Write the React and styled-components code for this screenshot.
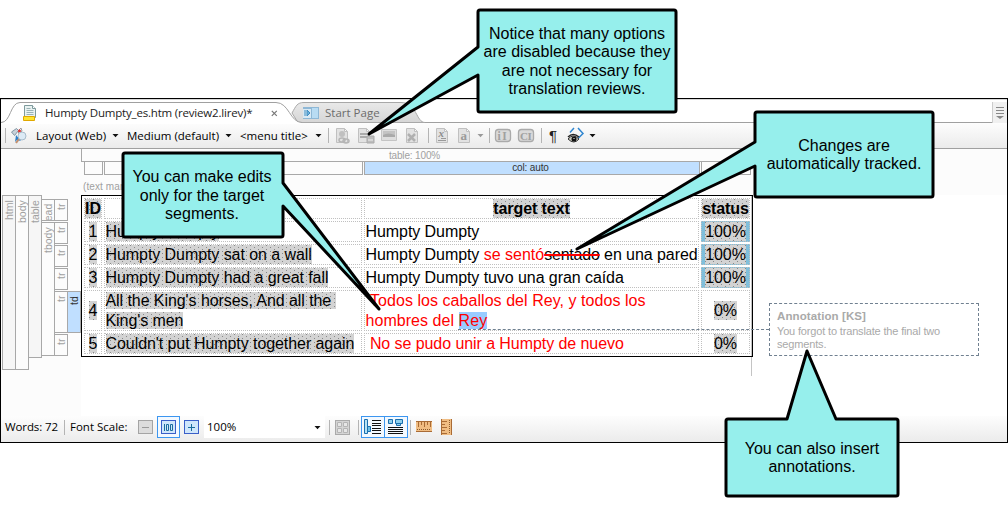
import React from "react";
import styled, { createGlobalStyle } from "styled-components";

const Global = createGlobalStyle`
  *{box-sizing:border-box}
  body{margin:0;background:#fff;overflow:hidden}
`;
const UI = '"Open Sans","Noto Sans",sans-serif';
const ARIAL = '"Liberation Sans",Arial,sans-serif';

const Page = styled.div`position:relative;width:1008px;height:506px;padding-top:98px;font-family:${UI};color:#000;`;
const Window = styled.div`width:1008px;height:345px;border:1px solid #000;display:flex;flex-direction:column;background:#fff;`;

const TabBar = styled.div`height:24px;flex:none;display:flex;padding-top:2px;border-bottom:1px solid #a0a0a0;border-top:1px solid #d8d8d8;background:#fff;`;
const Tab = styled.div`
  position:relative;flex:none;width:${p => p.$w}px;height:22px;margin-left:${p => p.$ml || 0}px;padding-left:${p => p.$pl}px;
  display:flex;align-items:center;color:${p => p.$color || "#222"};z-index:${p => p.$z || 0};
`;
const TabShape = styled.svg`position:absolute;left:0;top:0;`;
const TabContent = styled.div`position:relative;display:flex;align-items:center;height:22px;`;
const Label = styled.span`
  display:block;flex:none;width:${p => p.$w}px;margin-left:${p => p.$ml || 0}px;white-space:nowrap;
  font-size:${p => p.$size || 11.5}px;letter-spacing:${p => p.$ls || 0}px;line-height:18px;
`;
const Grow = styled.div`flex:1;`;
const TabMenu = styled.div`width:15px;height:21px;background:#f0f0f0;border-left:1px solid #ccc;`;

const Bar = styled.div`
  height:${p => p.$h}px;flex:none;display:flex;align-items:center;background:linear-gradient(#fdfdfd,#ebebeb);
  border-bottom:${p => (p.$line ? "1px solid #a0a0a0" : "0")};padding-bottom:${p => p.$pb || 0}px;
`;
const Sep = styled.div`width:1px;height:15px;flex:none;background:#b4b4b4;margin-left:${p => p.$ml || 0}px;`;
const Icon = styled.svg`display:block;flex:none;margin-left:${p => p.$ml || 0}px;overflow:visible;`;
const Pilcrow = styled.span`width:10px;margin-left:7px;flex:none;font:15px/18px ${ARIAL};color:#222;`;

const Workspace = styled.div`height:267px;flex:none;display:flex;flex-direction:column;background:#fff;`;
const ColumnHeader = styled.div`height:46px;flex:none;background:#fcfcfc;padding-left:80px;font:10px/12px ${ARIAL};letter-spacing:-.15px;color:#a0a0a0;`;
const TableSpan = styled.div`width:671px;height:13px;border:1px solid #a8a8a8;border-top:0;text-align:center;line-height:14px;padding-right:4px;`;
const ColumnRow = styled.div`display:flex;gap:1px;padding-left:3px;`;
const Column = styled.div`
  width:${p => p.$w}px;height:13px;border:1px solid #a8a8a8;border-top:0;text-align:center;line-height:12px;padding-right:3px;
  background:${p => (p.$on ? "#c0dfff" : "transparent")};color:${p => (p.$on ? "#333" : "#a0a0a0")};
`;
const MarkerNote = styled.div`height:18px;padding:6px 0 0 2px;line-height:12px;letter-spacing:.1px;`;
const Lower = styled.div`display:flex;flex:1;`;
const Gutter = styled.div`width:80px;flex:none;display:flex;background:#fcfcfc;padding-left:1px;`;
const Stack = styled.div`width:13px;flex:none;display:flex;flex-direction:column;gap:1px;padding-top:${p => p.$pt || 0}px;`;
const Tag = styled.div`
  width:14px;height:${p => p.$h}px;flex:none;border:1px solid #a8a8a8;overflow:hidden;
  background:${p => (p.$on ? "#c0dfff" : p.$shade ? "#f6f6f6" : "#fcfcfc")};
  color:${p => (p.$on ? "#333" : "#a0a0a0")};display:flex;justify-content:flex-end;
  writing-mode:vertical-rl;transform:rotate(180deg);font:10.5px/12px ${ARIAL};padding-bottom:4px;
`;
const Doc = styled.div`width:672px;height:162px;border:1px solid #000;padding:2px;
  display:grid;grid-template-columns:18px 258px 335px 49px;grid-template-rows:repeat(4,21px) 41px 21px;gap:2px;
  font:16px/20px ${ARIAL};letter-spacing:-.07px;box-shadow:inset -1px 0 0 #c4c4c4;`;
const Cell = styled.div`
  border:1px dotted #c0c0c0;display:flex;align-items:center;justify-content:${p => (p.$center ? "center" : "flex-start")};
  white-space:nowrap;font-weight:${p => (p.$bold ? 700 : 400)};background:${p => (p.$blue ? "#80bfdb" : "transparent")};
  padding-left:${p => (p.$center ? 0 : 0.5)}px;
`;
const Locked = styled.span`
  line-height:19px;background-color:#d3d3d3;
  background-image:url("data:image/svg+xml,%3Csvg xmlns='http://www.w3.org/2000/svg' width='8' height='4'%3E%3Cpath d='M0 0h1v1h-1zM4 2h1v1h-1z' fill='%23888'/%3E%3C/svg%3E");
`;
const Inserted = styled.span`color:#f00;letter-spacing:${p => p.$ls || 0}px;`;
const Deleted = styled.span`text-decoration:line-through #f00 2px;letter-spacing:-.2px;`;
const Selected = styled.span`color:#f00;background:#99ccff;`;
const MarginLine = styled.div`position:absolute;left:751px;top:357px;width:1px;height:19px;background:#c4c4c4;`;

const Toggle = styled.div`width:${p => p.$w || 24}px;height:22px;flex:none;border:1px solid #3c96f0;background:#f3f9ff;display:flex;align-items:center;justify-content:center;margin-left:${p => p.$ml || 0}px;`;
const Combo = styled.div`width:121px;height:22px;flex:none;margin-left:5px;background:#fff;display:flex;align-items:center;padding-left:3px;`;

const Connector = styled.div`position:absolute;left:458px;top:329px;width:311px;border-top:1px dashed #708090;`;
const Annotation = styled.div`
  position:absolute;left:769px;top:303px;width:210px;height:53px;border:1px dashed #708090;padding:5px 7px;
  font:11px/13px ${ARIAL};color:#a9a9a9;letter-spacing:-.16px;
`;
const AnnotationTitle = styled.div`font-weight:700;font-size:11.5px;line-height:14px;margin-bottom:2px;letter-spacing:.1px;`;
const Overlay = styled.svg`position:absolute;left:0;top:0;pointer-events:none;`;
const CalloutText = styled.div`
  position:absolute;left:${p => p.$x}px;top:${p => p.$y}px;width:${p => p.$w}px;text-align:center;white-space:nowrap;
  font:16px/${p => p.$lh || 18}px ${ARIAL};
`;

const Caret = ({ ml, color = "#111" }) => (
  <Icon $ml={ml} width="7" height="5" viewBox="0 0 7 5"><path d="M0.5 1h6L3.5 4.2z" fill={color} /></Icon>
);
const Sheet = () => <path d="M.5 .5h8l3 3v11h-11z M8.5 .5v3h3" fill="#e2e2e2" stroke="#c0c0c0" />;
const Badge = ({ children, ml }) => (
  <Icon $ml={ml} width="16" height="14">
    <rect x=".5" y=".5" width="15" height="12" rx="3" fill="#dadada" stroke="#aaa" strokeWidth="1.3" />
    {children}
  </Icon>
);

const calloutShapes = [
  "M480 10H674Q676 10 676 12V110Q676 112 674 112H480Q478 112 478 110V75L369 134L478 47V12Q478 10 480 10Z",
  "M125 153H281Q283 153 283 155V183L379 309L283 206V235Q283 237 281 237H125Q123 237 123 235V155Q123 153 125 153Z",
  "M757 112H931Q933 112 933 114V195Q933 197 931 197H757Q755 197 755 195V166L577 249L755 142V114Q755 112 757 112Z",
  "M728 419H787L807 351L836 419H896Q898 419 898 421V494Q898 496 896 496H728Q726 496 726 494V421Q726 419 728 419Z",
];

export default function App() {
  return (
    <Page>
      <Global />
      <Window>
        <TabBar>
          <Tab $w={302} $pl={22} $z={1}>
            <TabShape width="302" height="22">
              <path d="M0 20.5C10 20.5 9 .5 19 .5H275C288 .5 289 20.5 301 20.5V22H0z" fill="#fff" />
              <path d="M0 20.5C10 20.5 9 .5 19 .5H275C288 .5 289 20.5 301 20.5" fill="none" stroke="#a0a0a0" />
            </TabShape>
            <TabContent>
              <Icon width="14" height="17" viewBox="0 0 14 17">
                <path d="M1.5 .5h8l3 3v9h-11z" fill="#e9f2f2" stroke="#7e9a9c" /><path d="M9.5 .5v3h3" fill="#fff" stroke="#7e9a9c" />
                <path d="M3.5 3.5h4M3.5 5.5h7M3.5 7.5h7M3.5 9.5h7" stroke="#9ab3b5" />
                <path d="M.5 11.5h11v4h-11z" fill="#ffe52e" stroke="#e0a800" />
              </Icon>
              <Label $ml={8} $w={222} $ls={-0.19}>Humpty Dumpty_es.htm (review2.lirev)*</Label>
              <Icon $ml={4} width="7" height="7" viewBox="0 0 7 7"><path d="M.8 .8l5 5M5.8 .8l-5 5" stroke="#777" strokeWidth="1.2" /></Icon>
            </TabContent>
          </Tab>
          <Tab $w={135} $ml={-13} $pl={13} $color="#6c6c6c">
            <TabShape width="135" height="22">
              <defs><linearGradient id="tab" x2="0" y2="1"><stop stopColor="#e9e9e9" /><stop offset="1" stopColor="#d6d6d6" /></linearGradient></defs>
              <path d="M2 11C6 4 7 .5 14 .5H111C127 .5 126 20.5 135 20.5H8z" fill="url(#tab)" stroke="#a8a8a8" />
            </TabShape>
            <TabContent>
              <Icon width="16" height="12" viewBox="0 0 16 12">
                <path d="M0 0h16v12H0z" fill="#8fb8d6" /><path d="M9 1h6v10H9z" fill="#b9dcf3" /><path d="M0 2h8v9H0z" fill="#d9e9f4" />
                <path d="M2 3v6M4 3l3 3-3 3z" stroke="#3f8ec2" fill="#6fb1dc" />
              </Icon>
              <Label $ml={6} $w={60}>Start Page</Label>
            </TabContent>
          </Tab>
          <Grow />
          <TabMenu>
            <svg width="14" height="20"><path d="M3 5.5h8M3 8.5h8M3 11.5h8" stroke="#888" /><path d="M3 14h8l-4 3z" fill="#888" /></svg>
          </TabMenu>
        </TabBar>
        <Bar $h={26} $line>
          <Sep $ml={4} />
          <Icon $ml={5} width="17" height="17" viewBox="0 0 17 17">
            <path d="M.5 5l5-3.5 2 2-4 5z" fill="#c8d2da" stroke="#8296a4" />
            <path d="M7 4l3-3 1 3-3 3z" fill="#fff" stroke="#999" /><path d="M7 4h3M8.5 2.5v3" stroke="#e03030" strokeWidth="1.5" />
            <path d="M5 8l5 6-4-1-2 2z" fill="#2d7fc8" />
            <circle cx="11" cy="9" r="4" fill="#dceaf5" stroke="#a8bccb" /><path d="M8 12l-3 4" stroke="#c09070" strokeWidth="2" />
          </Icon>
          <Label $ml={8} $w={73}>Layout (Web)</Label><Caret ml={3} />
          <Label $ml={8} $w={94}>Medium (default)</Label><Caret ml={4} />
          <Label $ml={8} $w={70}>&lt;menu title&gt;</Label><Caret ml={5} />
          <Sep $ml={6} />
          <Icon $ml={7} width="16" height="16"><Sheet /><circle cx="6" cy="6" r="3" fill="#c0c0c0" /><ellipse cx="6" cy="12" rx="3" ry="2" fill="none" stroke="#b5b5b5" strokeWidth="1.5" /><ellipse cx="10" cy="13" rx="3" ry="2" fill="none" stroke="#b5b5b5" strokeWidth="1.5" /></Icon>
          <Icon $ml={6} width="16" height="16"><Sheet /><path d="M2 6h7M2 9h7" stroke="#999" strokeWidth="1.5" /><path d="M9 8h7v7H9z" fill="#bdbdbd" stroke="#aaa" /><path d="M10 12h5" stroke="#eee" /></Icon>
          <Icon $ml={7} width="16" height="14"><path d="M.5 .5h15v11H.5z" fill="#dedede" stroke="#c4c4c4" /><path d="M2 2h12v6H2z" fill="#c4c4c4" /><path d="M2 6q5-3 12 0v2H2z" fill="#aaa" /></Icon>
          <Icon $ml={9} width="14" height="16"><Sheet /><path d="M2 6l7 7M9 6l-7 7" stroke="#b0b0b0" strokeWidth="2.5" /></Icon>
          <Sep $ml={8} />
          <Icon $ml={7} width="13" height="16"><Sheet /><text x="2.5" y="9" fontFamily="Liberation Serif,serif" fontStyle="italic" fontWeight="700" fontSize="11" fill="#8c8c8c">x</text><path d="M5 10.5h5M2 12.5h8" stroke="#999" /></Icon>
          <Icon $ml={9} width="13" height="16"><Sheet /><text x="2.5" y="12" fontFamily="Liberation Serif,serif" fontWeight="700" fontSize="13" fill="#999">a</text></Icon>
          <Caret ml={6} color="#999" />
          <Sep $ml={5} />
          <Badge ml={5}><text x="2.5" y="10.5" fontFamily="Liberation Serif,serif" fontWeight="700" fontSize="11.5" fill="#a0a0a0" letterSpacing="1.5">iI</text></Badge>
          <Badge ml={7}><text x="2" y="10.5" fontFamily="Liberation Serif,serif" fontWeight="700" fontSize="11" fill="#a0a0a0" letterSpacing="-.5">CI</text></Badge>
          <Sep $ml={7} />
          <Pilcrow>¶</Pilcrow>
          <Icon $ml={9} width="16" height="16" viewBox="0 0 16 16">
            <path d="M6 0L2 4.500M10 0l5 5.500-5 5" fill="none" stroke="#2f86d0" strokeWidth="1.5" />
            <path d="M0 11Q5 5 11 11Q6 17 0 11z" fill="#c8c8bc" stroke="#333" /><circle cx="6" cy="11" r="2.5" fill="#111" /><path d="M0 9Q5 4 11 9" fill="none" stroke="#222" strokeWidth="1.5" />
            <path d="M5.500 10.500h1" stroke="#fff" />
          </Icon>
          <Caret ml={5} />
        </Bar>
        <Workspace>
          <ColumnHeader>
            <TableSpan>table: 100%</TableSpan>
            <ColumnRow>
              <Column $w={19} /><Column $w={259} /><Column $w={336} $on>col: auto</Column><Column $w={50} />
            </ColumnRow>
            <MarkerNote>(text markers)</MarkerNote>
          </ColumnHeader>
          <Lower>
            <Gutter>
              <Stack><Tag $h={175} $shade>html</Tag></Stack>
              <Stack><Tag $h={175}>body</Tag></Stack>
              <Stack><Tag $h={163} $shade>table</Tag></Stack>
              <Stack $pt={4}><Tag $h={22}>thead</Tag><Tag $h={134}>tbody</Tag></Stack>
              <Stack $pt={4}>
                <Tag $h={22}>tr</Tag><Tag $h={22}>tr</Tag><Tag $h={22}>tr</Tag><Tag $h={22}>tr</Tag><Tag $h={42}>tr</Tag><Tag $h={22}>tr</Tag>
              </Stack>
              <Stack $pt={96}><Tag $h={42} $on>td</Tag></Stack>
            </Gutter>
            <Doc>
              <Cell $center $bold><Locked>ID</Locked></Cell><Cell $center $bold />
              <Cell $center $bold><Locked>target text</Locked></Cell><Cell $center $bold><Locked>status</Locked></Cell>
              <Cell $center><Locked>1</Locked></Cell><Cell><Locked>Humpty Dumpty</Locked></Cell><Cell>Humpty Dumpty</Cell><Cell $center $blue><Locked>100%</Locked></Cell>
              <Cell $center><Locked>2</Locked></Cell><Cell><Locked>Humpty Dumpty sat on a wall</Locked></Cell>
              <Cell><span>Humpty Dumpty <Inserted>se sentó</Inserted><Deleted>sentado</Deleted> en una pared</span></Cell><Cell $center $blue><Locked>100%</Locked></Cell>
              <Cell $center><Locked>3</Locked></Cell><Cell><Locked>Humpty Dumpty had a great fall</Locked></Cell><Cell>Humpty Dumpty tuvo una gran caída</Cell><Cell $center $blue><Locked>100%</Locked></Cell>
              <Cell $center><Locked>4</Locked></Cell><Cell><span><Locked>All the King's horses, And all the&nbsp;<br />King's men</Locked></span></Cell>
              <Cell><Inserted $ls={0.05}>&nbsp;Todos los caballos del Rey, y todos los<br />hombres del <Selected>Rey</Selected></Inserted></Cell><Cell $center><Locked>0%</Locked></Cell>
              <Cell $center><Locked>5</Locked></Cell><Cell><Locked>Couldn't put Humpty together again</Locked></Cell><Cell><Inserted $ls={-0.07}>&nbsp;No se pudo unir a Humpty de nuevo</Inserted></Cell><Cell $center><Locked>0%</Locked></Cell>
            </Doc>
          </Lower>
        </Workspace>
        <Bar $h={26} $pb={4}>
          <Label $ml={4} $w={54} $ls={-0.1}>Words: 72</Label>
          <Sep $ml={5} />
          <Label $ml={5} $w={60}>Font Scale:</Label>
          <Icon $ml={8} width="15" height="14"><rect x=".5" y=".5" width="14" height="13" fill="#dcdcdc" stroke="#a4a4a4" /><path d="M4 7.500h7" stroke="#999" /></Icon>
          <Toggle $w={23} $ml={4}><Icon width="15" height="14"><rect x=".5" y=".5" width="14" height="13" fill="#cfe6fb" stroke="#3a5fc8" /><path d="M3.500 4v7M5.500 4.500h2v6h-2zM9.500 4.500h2v6h-2z" fill="none" stroke="#1a6c9c" /></Icon></Toggle>
          <Icon $ml={4} width="15" height="14"><rect x=".5" y=".5" width="14" height="13" fill="#cfe6fb" stroke="#3a5fc8" /><path d="M4 7.500h7M7.500 4v7" stroke="#1a6c9c" /></Icon>
          <Combo><Label $w={35}>100%</Label><Grow /><Caret /><Label $w={4} /></Combo>
          <Sep $ml={4} />
          <Icon $ml={5} width="15" height="15"><rect x=".5" y=".5" width="14" height="14" fill="#d4d4d4" stroke="#aaa" /><path d="M2.500 2.500h4v4h-4zM8.500 2.500h4v4h-4zM2.500 8.500h4v4h-4zM8.500 8.500h4v4h-4z" fill="#e6e6e6" stroke="#b4b4b4" /></Icon>
          <Sep $ml={8} />
          <Toggle $ml={2}><Icon width="18" height="16"><path d="M.5 .5h3v14h-3z" fill="#b5e2f5" stroke="#1b6fae" /><path d="M3.500 7.500h3v5h-3z" fill="#6bbfe6" stroke="#1b6fae" /><path d="M8 1.500h9M8 4.500h9M8 6.500h9M8 9.500h9M8 11.500h9M8 14.500h9" stroke="#111" /></Icon></Toggle>
          <Toggle $ml={-1}><Icon width="16" height="16"><path d="M.5 .5h4v4h-4zM7.500 .5h7v4h-7zM8.500 4.500h4v2h-4z" fill="#8fd0ee" stroke="#1b6fae" /><path d="M0 8.500h15M0 10.500h15M0 12.500h15M0 14.500h15" stroke="#111" /></Icon></Toggle>
          <Sep $ml={2} />
          <Icon $ml={5} width="16" height="12"><path d="M0 0h16v11H0z" fill="#f0bd83" /><path d="M0 .5h16M0 10.500h16M2.500 1v5M5.500 1v3M8.500 1v5M11.500 1v3M14.500 1v5" stroke="#a96b35" /><path d="M1 8.500h14" stroke="#8a5a2c" strokeDasharray="1 1" /></Icon>
          <Icon $ml={9} width="12" height="16"><path d="M0 0h11v16H0z" fill="#f0bd83" /><path d="M.5 0v16M10.500 0v16M1 2.500h5M1 5.500h3M1 8.500h5M1 11.500h3M1 14.500h5" stroke="#a96b35" /><path d="M8.500 1v14" stroke="#8a5a2c" strokeDasharray="1 1" /></Icon>
        </Bar>
      </Window>
      <MarginLine />
      <Connector />
      <Annotation>
        <AnnotationTitle>Annotation [KS]</AnnotationTitle>
        You forgot to translate the final two<br />segments.
      </Annotation>
      <Overlay width="1008" height="506">
        {calloutShapes.map(d => <path key={d} d={d} fill="#96efec" stroke="#000" strokeWidth="3" strokeLinejoin="round" />)}
      </Overlay>
      <CalloutText $x={478} $y={25} $w={198} $lh={18.3}>Notice that many options<br />are disabled because they<br />are not necessary for<br />translation reviews.</CalloutText>
      <CalloutText $x={122} $y={168} $w={160} $lh={18.5}>You can make edits<br />only for the target<br />segments.</CalloutText>
      <CalloutText $x={755} $y={137} $w={178}>Changes are<br />automatically tracked.</CalloutText>
      <CalloutText $x={726} $y={440} $w={172}>You can also insert<br />annotations.</CalloutText>
    </Page>
  );
}
